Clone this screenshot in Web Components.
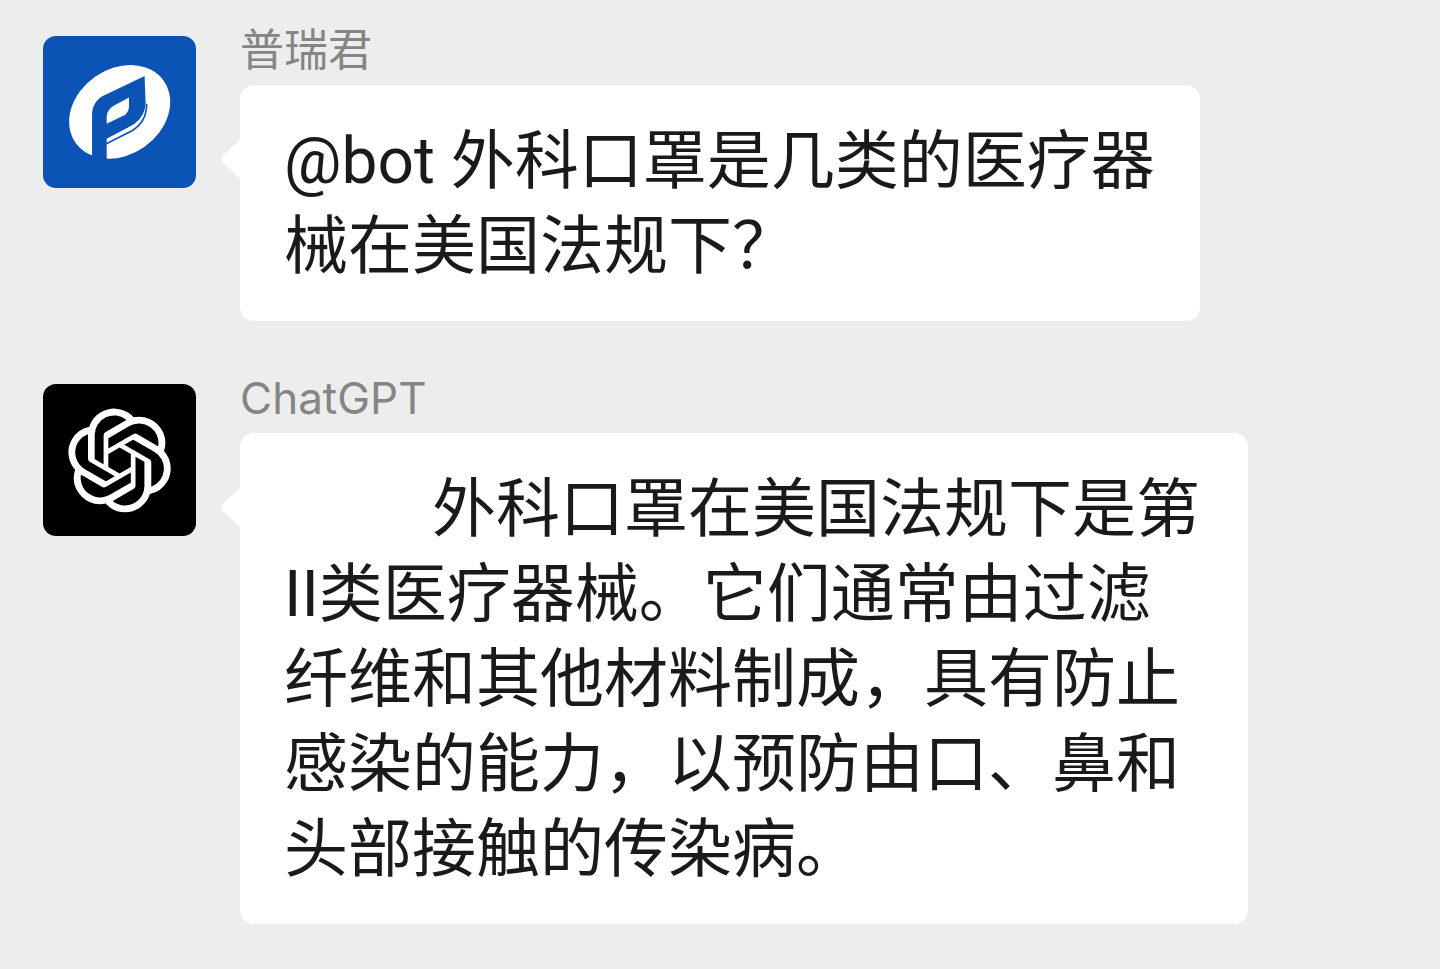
<!DOCTYPE html>
<html lang="zh-CN">
<head>
<meta charset="utf-8">
<meta name="viewport" content="width=device-width, initial-scale=1">
<title>群聊</title>
<style>
  body {
    margin: 0;
    background: #ededed;
    color: #1a1a1a;
    font-family: Roboto, "Noto Sans CJK SC", sans-serif;
  }
</style>
</head>
<body>
<chat-thread>
  <chat-message name="普瑞君">
    <brand-avatar slot="avatar"></brand-avatar>
    <chat-bubble>@bot 外科口罩是几类的医疗器械在美国法规下？</chat-bubble>
  </chat-message>
  <chat-message name="ChatGPT">
    <bot-avatar slot="avatar"></bot-avatar>
    <chat-bubble wide>外科口罩在美国法规下是第II类医疗器械。它们通常由过滤纤维和其他材料制成，具有防止感染的能力，以预防由口、鼻和头部接触的传染病。</chat-bubble>
  </chat-message>
</chat-thread>

<script>
  class ShadowElement extends HTMLElement {
    constructor() {
      super();
      this.attachShadow({ mode: "open" }).innerHTML = this.constructor.markup;
    }
  }

  customElements.define("chat-thread", class extends ShadowElement {
    static markup = `
      <style>
        :host { display: flex; flex-direction: column; gap: 47px; padding: 20px 43px 45px; }
      </style>
      <slot></slot>`;
  });

  customElements.define("chat-message", class extends ShadowElement {
    static markup = `
      <style>
        :host { display: grid; grid-template-columns: 153px minmax(0, 1fr); column-gap: 44px; align-items: start; }
        .avatar { padding-top: 16px; }
        .name {
          margin: 0 0 5px;
          font: 400 44px/60px Inter, "Noto Sans CJK SC", sans-serif;
          color: #858585;
        }
      </style>
      <div class="avatar"><slot name="avatar"></slot></div>
      <div class="content">
        <h2 class="name"></h2>
        <slot></slot>
      </div>`;
    connectedCallback() {
      this.shadowRoot.querySelector(".name").textContent = this.getAttribute("name");
    }
  });

  customElements.define("chat-bubble", class extends ShadowElement {
    static markup = `
      <style>
        :host {
          display: block;
          position: relative;
          box-sizing: border-box;
          width: fit-content;
          max-width: 960px;
          padding: 34px 44px 32px;
          border-radius: 14px;
          background: #fff;
          font-size: 64px;
          line-height: 85px;
        }
        :host([wide]) { max-width: 1008px; text-indent: 148px; }
        p { margin: 0; }
        .tail { position: absolute; top: 52px; left: -19px; width: 20px; height: 44px; fill: #fff; }
      </style>
      <svg class="tail" viewBox="0 0 20 44" aria-hidden="true"><path d="M20 0Q19 3 16 6L2 18Q-1 22 2 26L16 39Q19 42 20 44Z"/></svg>
      <p><slot></slot></p>`;
  });

  const avatarStyle = `
      <style>
        :host { display: block; height: 152px; border-radius: 13px; overflow: hidden; background: var(--tile); }
        svg { display: block; width: 100%; height: 100%; }
      </style>`;

  customElements.define("brand-avatar", class extends ShadowElement {
    static markup = avatarStyle + `
      <style>:host { --tile: #0b54b5; }</style>
      <svg viewBox="39 48 457 457" role="img" aria-label="普瑞君">
        <ellipse cx="268" cy="276" rx="162" ry="129" transform="rotate(-35 268 276)" fill="#fff"/>
        <path fill="#0b54b5" d="M185 430V286Q185 244 222 226L343 168L346 250Q344 293 303 318L229 357V430Z"/>
        <path fill="#fff" d="M229 312V290Q230 270 250 258L296 233V262Q294 280 280 287Z"/>
        <path fill="none" stroke="#0b54b5" stroke-width="5" d="M228 372L305 333Q350 306 349 252"/>
      </svg>`;
  });

  customElements.define("bot-avatar", class extends ShadowElement {
    static markup = avatarStyle + `
      <style>:host { --tile: #000; }</style>
      <svg viewBox="0 0 153 152" role="img" aria-label="ChatGPT">
        <path fill="#fff" transform="translate(24.7 24.6) scale(4.32)" d="M22.2819 9.8211a5.9847 5.9847 0 0 0-.5157-4.9108 6.0462 6.0462 0 0 0-6.5098-2.9A6.0651 6.0651 0 0 0 4.9807 4.1818a5.9847 5.9847 0 0 0-3.9977 2.9 6.0462 6.0462 0 0 0 .7427 7.0966 5.98 5.98 0 0 0 .511 4.9107 6.051 6.051 0 0 0 6.5146 2.9001A5.9847 5.9847 0 0 0 13.2599 24a6.0557 6.0557 0 0 0 5.7718-4.2058 5.9894 5.9894 0 0 0 3.9977-2.9001 6.0557 6.0557 0 0 0-.7475-7.0729zm-9.022 12.6081a4.4755 4.4755 0 0 1-2.8764-1.0408l.1419-.0804 4.7783-2.7582a.7948.7948 0 0 0 .3927-.6813v-6.7369l2.02 1.1686a.071.071 0 0 1 .038.052v5.5826a4.504 4.504 0 0 1-4.4945 4.4944zm-9.6607-4.1254a4.4708 4.4708 0 0 1-.5346-3.0137l.142.0852 4.783 2.7582a.7712.7712 0 0 0 .7806 0l5.8428-3.3685v2.3324a.0804.0804 0 0 1-.0332.0615L9.74 19.9502a4.4992 4.4992 0 0 1-6.1408-1.6464zM2.3408 7.8956a4.485 4.485 0 0 1 2.3655-1.9728V11.6a.7664.7664 0 0 0 .3879.6765l5.8144 3.3543-2.0201 1.1685a.0757.0757 0 0 1-.071 0l-4.8303-2.7865A4.504 4.504 0 0 1 2.3408 7.872zm16.5963 3.8558L13.1038 8.364 15.1192 7.2a.0757.0757 0 0 1 .071 0l4.8303 2.7913a4.4944 4.4944 0 0 1-.6765 8.1042v-5.6772a.79.79 0 0 0-.407-.667zm2.0107-3.0231l-.142-.0852-4.7735-2.7818a.7759.7759 0 0 0-.7854 0L9.409 9.2297V6.8974a.0662.0662 0 0 1 .0284-.0615l4.8303-2.7866a4.4992 4.4992 0 0 1 6.6802 4.66zM8.3065 12.863l-2.02-1.1638a.0804.0804 0 0 1-.038-.0567V6.0742a4.4992 4.4992 0 0 1 7.3757-3.4537l-.142.0805L8.704 5.459a.7948.7948 0 0 0-.3927.6813zm1.0976-2.3654l2.602-1.4998 2.6069 1.4998v2.9994l-2.5974 1.4997-2.6067-1.4997Z"/>
      </svg>`;
  });
</script>
</body>
</html>
